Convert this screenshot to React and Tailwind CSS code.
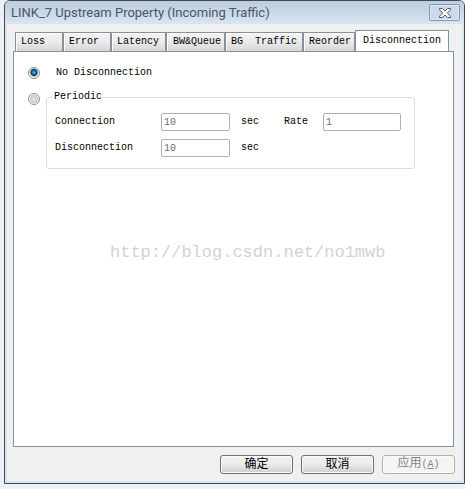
import { useState } from "react";

const tabs = [
  { name: "Loss", size: "w-12 pl-[5px]" },
  { name: "Error", size: "w-12 pl-[5px]" },
  { name: "Latency", size: "w-[55px] pl-[5px]" },
  { name: "BW&Queue", size: "w-[59px] pl-1.5" },
  { name: "BG  Traffic", size: "w-[78px] pl-[5px]" },
  { name: "Reorder", size: "w-[52px] pl-[5px]" },
  { name: "Disconnection", size: "w-[94px] pl-[7px]" },
];

function Tab({ name, size, active, onSelect }) {
  return (
    <button
      type="button"
      role="tab"
      aria-selected={active}
      onClick={onSelect}
      className={
        "shrink-0 whitespace-pre border border-b-0 border-[#8b8e9b] text-left " +
        size +
        (active
          ? " -mb-px h-[22px] bg-white pb-0.5"
          : " h-[19px] bg-linear-to-b from-[#f3f3f3] via-[#ebebeb] to-[#d5d5d5] shadow-[inset_1px_1px_0_#fcfcfc]")
      }
    >
      {name}
    </button>
  );
}

function Field({ id, value, width }) {
  return (
    <input
      id={id}
      type="text"
      disabled
      defaultValue={value}
      className={
        "h-[18px] rounded-xs border border-[#afafaf] bg-white px-0.5 text-[#6d6d6d] " + width
      }
    />
  );
}

function Radio({ id, checked, onSelect }) {
  return (
    <input
      id={id}
      type="radio"
      name="mode"
      checked={checked}
      onChange={onSelect}
      className="block size-3 shrink-0 appearance-none rounded-full border border-[#8e8f8f] bg-[radial-gradient(circle_at_50%_50%,#e4e4e4_0,#d2d2d2_40%,#c4c4c4_50%,#f4f4f4_62%)] checked:bg-[radial-gradient(circle_at_50%_45%,#7fd4f7_0,#1685bd_18%,#0b3560_42%,#b5c3cd_52%,#f4f4f4_64%)]"
    />
  );
}

function DialogButton({ children, disabled }) {
  return (
    <button
      type="button"
      disabled={disabled}
      className="h-[19px] w-[73px] rounded-[3px] border border-[#707070] bg-linear-to-b from-[#f2f2f2] from-0% via-[#ebebeb] via-48% to-[#cfcfcf] text-xs leading-4 text-black shadow-[inset_0_0_0_1px_#fafafa] disabled:border-[#adb2b5] disabled:bg-none disabled:bg-[#f4f4f4] disabled:text-[#838383]"
    >
      {children}
    </button>
  );
}

export default function App() {
  const [tab, setTab] = useState("Disconnection");
  const [mode, setMode] = useState("none");

  return (
    <div className="flex h-screen flex-col bg-[#eff0f6] pb-[5px] pl-1 font-['Liberation_Mono','Noto_Sans_CJK_SC',monospace] text-[10px] leading-3 text-black">
      <main className="flex min-h-0 flex-1 flex-col rounded-t-md border border-[#444b50] bg-[#d8e5f1] px-0.5 pb-0.5">
        <header className="-mx-0.5 flex h-[23px] shrink-0 items-center justify-between rounded-t-[5px] bg-linear-to-b from-[#bccddd] to-[#d8e5f2] pr-1 pl-1.5">
          <h1 className="font-['Roboto',sans-serif] text-[13px] text-[#4c5562]">
            LINK_7 Upstream Property (Incoming Traffic)
          </h1>
          <button
            type="button"
            aria-label="Close"
            className="flex h-[17px] w-[31px] items-center justify-center rounded-xs border border-[#8798b5] bg-[#cbd9e8] shadow-[inset_0_0_0_1px_#dce8f3]"
          >
            <svg width="12" height="10" viewBox="0 0 12 10" aria-hidden="true">
              <path
                d="M.5.5h3L6 3 8.500.5h3v1.300L8.300 5l3.200 3.200v1.300h-3L6 7 3.500 9.500h-3V8.200L3.700 5 .5 1.800Z"
                fill="#f8f8f8"
                stroke="#535b68"
                strokeWidth="1"
              />
            </svg>
          </button>
        </header>

        <div className="flex min-h-0 flex-1 flex-col bg-[#f0f0f0] pt-1.5 pr-2 pb-[7px] pl-1.5">
          <div role="tablist" className="flex items-end pl-0.5">
            {tabs.map((t) => (
              <Tab key={t.name} {...t} active={tab === t.name} onSelect={() => setTab(t.name)} />
            ))}
          </div>

          <section
            role="tabpanel"
            className="flex-1 border border-[#8b8e9b] bg-white pt-[15px] pr-[38px] pl-3.5"
          >
            <div className="flex items-center gap-4">
              <Radio id="none" checked={mode === "none"} onSelect={() => setMode("none")} />
              <label htmlFor="none">No Disconnection</label>
            </div>
            <div className="mt-3 flex gap-1.5">
              <div className="pt-0.5">
                <Radio
                  id="periodic"
                  checked={mode === "periodic"}
                  onSelect={() => setMode("periodic")}
                />
              </div>
              <fieldset className="min-w-0 flex-1 rounded-[3px] border border-[#d5dfe5] pb-[11px] pl-2">
                <legend className="-ml-0.5 px-px">
                  <label htmlFor="periodic">Periodic</label>
                </legend>
                <div className="mt-2.5 grid grid-cols-[106px_80px_43px_39px_1fr] items-center gap-y-2">
                  <label htmlFor="connection">Connection</label>
                  <Field id="connection" value="10" width="w-[69px]" />
                  <span>sec</span>
                  <label htmlFor="rate">Rate</label>
                  <Field id="rate" value="1" width="w-[78px]" />
                  <label htmlFor="disconnection">Disconnection</label>
                  <Field id="disconnection" value="10" width="w-[69px]" />
                  <span>sec</span>
                </div>
              </fieldset>
            </div>
            <p className="mt-[74px] pl-[82px] font-['Liberation_Mono',monospace] text-[17px] leading-5 text-[#d3d3cd]">
              http://blog.csdn.net/no1mwb
            </p>
          </section>

          <footer className="-mr-px flex justify-end gap-2 pt-2">
            <DialogButton>确定</DialogButton>
            <DialogButton>取消</DialogButton>
            <DialogButton disabled>
              应用
              <span className="text-[10px]">
                (<u>A</u>)
              </span>
            </DialogButton>
          </footer>
        </div>
      </main>
    </div>
  );
}
